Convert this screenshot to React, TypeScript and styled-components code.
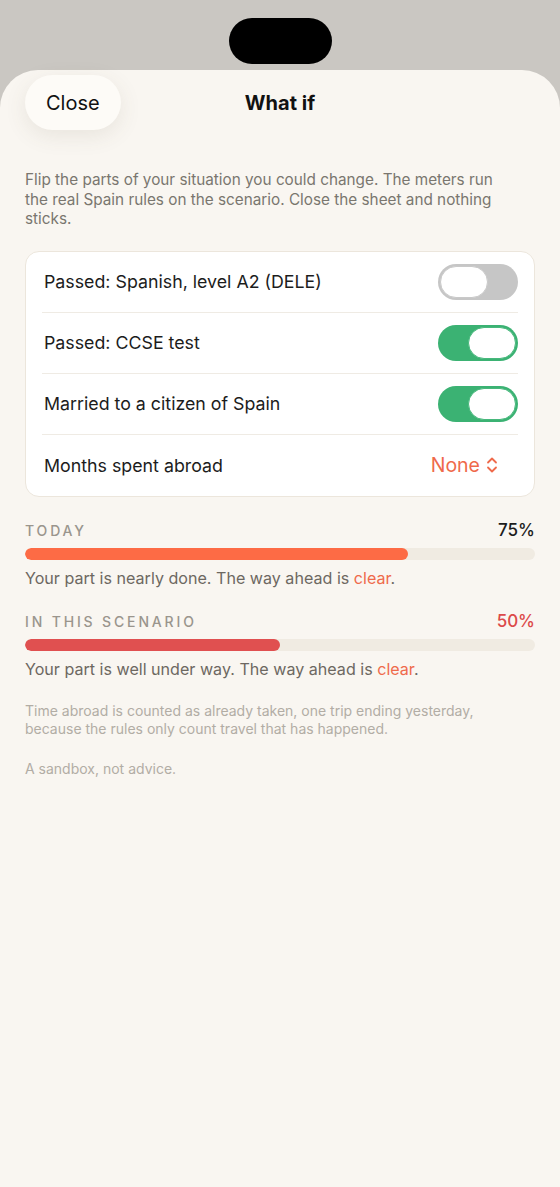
import { useState } from "react";
import styled, { createGlobalStyle } from "styled-components";

const GlobalStyle = createGlobalStyle`
  body {
    margin: 0;
    background: #cac7c2;
    font-family: Inter, "Noto Sans", "Liberation Sans", sans-serif;
    -webkit-font-smoothing: antialiased;
  }
`;

const Screen = styled.div`
  min-height: 1187px;
  display: flex;
  flex-direction: column;
`;

const StatusArea = styled.div`
  height: 70px;
  display: flex;
  justify-content: center;
  padding-top: 18px;
  box-sizing: border-box;
`;

const Island = styled.div`
  width: 103px;
  height: 46px;
  border-radius: 23px;
  background: #000;
`;

const Sheet = styled.div`
  flex: 1;
  background: #f9f6f1;
  border-radius: 38px 38px 0 0;
  padding: 5px 25px 40px;
`;

const Header = styled.header`
  display: grid;
  grid-template-columns: 1fr auto 1fr;
  align-items: center;
`;

const CloseButton = styled.button`
  justify-self: start;
  height: 55px;
  padding: 0 21px;
  border: none;
  border-radius: 28px;
  background: #fdfbf7;
  box-shadow: 0 6px 22px rgba(90, 80, 60, 0.1);
  font: inherit;
  font-size: 20px;
  color: #111;
`;

const Title = styled.h1`
  margin: 0;
  font-size: 20px;
  font-weight: 700;
  color: #111;
`;

const Intro = styled.p`
  margin: 40px 0 22px;
  max-width: 485px;
  font-size: 15.3px;
  line-height: 19.5px;
  color: #7a766f;
`;

const Card = styled.div`
  background: #fff;
  border: 1px solid #ece6dc;
  border-radius: 14px;
`;

const Row = styled.div`
  height: 61px;
  margin: 0 16px;
  display: flex;
  align-items: center;
  justify-content: space-between;
  border-bottom: 1px solid #efebe4;
  box-sizing: border-box;

  &:last-child {
    border-bottom: none;
  }
`;

const Label = styled.span`
  font-size: 17.8px;
  color: #1c1c1c;
  padding-left: 2px;
`;

const Track = styled.button<{ $on: boolean }>`
  width: 80px;
  height: 36px;
  border-radius: 18px;
  border: none;
  padding: 2px;
  display: flex;
  justify-content: ${(p) => (p.$on ? "flex-end" : "flex-start")};
  background: ${(p) => (p.$on ? "#3bb273" : "#c6c6c6")};
  cursor: pointer;
`;

const Knob = styled.span<{ $on: boolean }>`
  width: 48px;
  height: 32px;
  border-radius: 16px;
  background: #fff;
  box-sizing: border-box;
  border: 1.5px solid ${(p) => (p.$on ? "#47b87c" : "#c9c9c9")};
`;

const Picker = styled.span`
  display: flex;
  align-items: center;
  gap: 6px;
  margin-right: 20px;
  font-size: 19.5px;
  color: #ef6a4b;
`;

const Meter = styled.section`
  margin-top: 24px;
`;

const MeterHead = styled.div`
  display: flex;
  justify-content: space-between;
  align-items: baseline;
  height: 18px;
  line-height: 18px;
`;

const MeterLabel = styled.span`
  font-size: 14px;
  font-weight: 500;
  letter-spacing: 2.85px;
  color: #9a958d;
`;

const Percent = styled.span<{ $color: string }>`
  font-size: 17px;
  font-weight: 500;
  color: ${(p) => p.$color};
`;

const Bar = styled.div`
  margin-top: 9px;
  height: 12px;
  border-radius: 6px;
  background: #f0ebe2;
  overflow: hidden;
`;

const Fill = styled.div<{ $color: string }>`
  height: 100%;
  border-radius: 6px;
  background: ${(p) => p.$color};
`;

const Verdict = styled.p`
  margin: 8px 0 0;
  font-size: 16.1px;
  line-height: 20px;
  color: #6d6861;
`;

const Accent = styled.span`
  color: #ef6a4b;
`;

const Note = styled.p<{ $gap: number }>`
  margin: ${(p) => p.$gap}px 0 0;
  max-width: 485px;
  font-size: 14px;
  line-height: 18px;
  color: #b2ada5;
`;

function Toggle({ on, onChange }: { on: boolean; onChange: () => void }) {
  return (
    <Track $on={on} onClick={onChange} aria-pressed={on}>
      <Knob $on={on} />
    </Track>
  );
}

function Chevrons() {
  return (
    <svg width="12" height="18" viewBox="0 0 12 18" fill="none" stroke="#ef6a4b" strokeWidth="1.8" strokeLinecap="round" strokeLinejoin="round">
      <path d="M2 6.5 L6 2.5 L10 6.5" />
      <path d="M2 11.5 L6 15.5 L10 11.5" />
    </svg>
  );
}

export default function App() {
  const [dele, setDele] = useState(false);
  const [ccse, setCcse] = useState(true);
  const [married, setMarried] = useState(true);

  return (
    <>
      <GlobalStyle />
      <Screen>
        <StatusArea>
          <Island />
        </StatusArea>
        <Sheet>
          <Header>
            <CloseButton>Close</CloseButton>
            <Title>What if</Title>
            <span />
          </Header>
          <Intro>
            Flip the parts of your situation you could change. The meters run the real Spain rules on
            the scenario. Close the sheet and nothing sticks.
          </Intro>
          <Card>
            <Row>
              <Label>Passed: Spanish, level A2 (DELE)</Label>
              <Toggle on={dele} onChange={() => setDele(!dele)} />
            </Row>
            <Row>
              <Label>Passed: CCSE test</Label>
              <Toggle on={ccse} onChange={() => setCcse(!ccse)} />
            </Row>
            <Row>
              <Label>Married to a citizen of Spain</Label>
              <Toggle on={married} onChange={() => setMarried(!married)} />
            </Row>
            <Row>
              <Label>Months spent abroad</Label>
              <Picker>
                None <Chevrons />
              </Picker>
            </Row>
          </Card>

          <Meter>
            <MeterHead>
              <MeterLabel>TODAY</MeterLabel>
              <Percent $color="#1c1c1c">75%</Percent>
            </MeterHead>
            <Bar>
              <Fill $color="#fd6b45" style={{ width: "75%" }} />
            </Bar>
            <Verdict>
              Your part is nearly done. The way ahead is <Accent>clear</Accent>.
            </Verdict>
          </Meter>

          <Meter>
            <MeterHead>
              <MeterLabel>IN THIS SCENARIO</MeterLabel>
              <Percent $color="#dc4a4a">50%</Percent>
            </MeterHead>
            <Bar>
              <Fill $color="#e05050" style={{ width: "50%" }} />
            </Bar>
            <Verdict>
              Your part is well under way. The way ahead is <Accent>clear</Accent>.
            </Verdict>
          </Meter>

          <Note $gap={23}>
            Time abroad is counted as already taken, one trip ending yesterday, because the rules only
            count travel that has happened.
          </Note>
          <Note $gap={22}>A sandbox, not advice.</Note>
        </Sheet>
      </Screen>
    </>
  );
}
